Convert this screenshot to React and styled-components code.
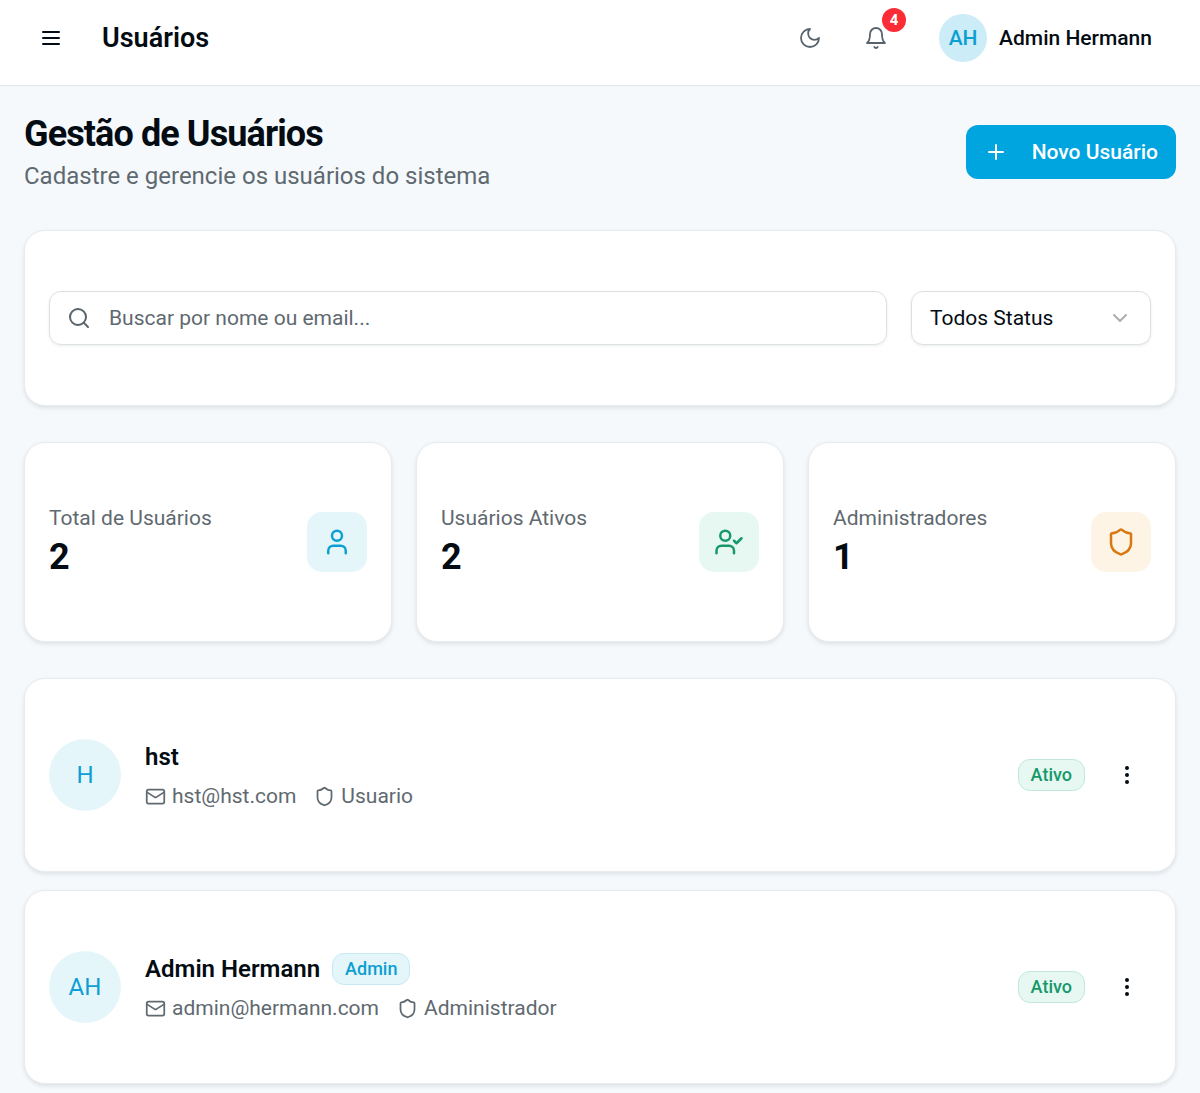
import { useState } from 'react';
import styled, { createGlobalStyle } from 'styled-components';
import {
  ChevronDown,
  EllipsisVertical,
  Mail,
  Plus,
  Search,
  Shield,
  User,
  UserCheck,
} from 'lucide-react';

const tones = {
  primary: { color: '#0d9fd3', background: '#e5f6fb', border: '#c5e9f4' },
  success: { color: '#16986b', background: '#e6f8f1', border: '#c0e9da' },
  warning: { color: '#d9780f', background: '#fef4e6', border: '#fbe0ba' },
};

const users = [
  { id: 1, name: 'hst', initials: 'H', email: 'hst@hst.com', role: 'Usuario', admin: false },
  {
    id: 2,
    name: 'Admin Hermann',
    initials: 'AH',
    email: 'admin@hermann.com',
    role: 'Administrador',
    admin: true,
  },
];

const stats = [
  { label: 'Total de Usuários', value: 2, icon: User, tone: 'primary' },
  { label: 'Usuários Ativos', value: 2, icon: UserCheck, tone: 'success' },
  { label: 'Administradores', value: 1, icon: Shield, tone: 'warning' },
];

function HeaderIcon({ paths, strokeWidth = 2 }) {
  return (
    <svg
      width="24"
      height="24"
      viewBox="0 0 24 24"
      fill="none"
      stroke="currentColor"
      strokeWidth={strokeWidth}
      strokeLinecap="round"
      strokeLinejoin="round"
    >
      {paths.map((d) => (
        <path key={d} d={d} />
      ))}
    </svg>
  );
}

const menuPaths = ['M4 6h16', 'M4 12h16', 'M4 18h16'];
const moonPaths = ['M12 3a6 6 0 0 0 9 9 9 9 0 1 1-9-9Z'];
const bellPaths = ['M6 8a6 6 0 0 1 12 0c0 7 3 9 3 9H3s3-2 3-9', 'M10.3 21a1.94 1.94 0 0 0 3.4 0'];

export default function App() {
  const [search, setSearch] = useState('');
  const [status, setStatus] = useState('todos');

  return (
    <>
      <GlobalStyle />
      <Header>
        <IconButton aria-label="Abrir menu">
          <HeaderIcon paths={menuPaths} />
        </IconButton>
        <HeaderTitle>Usuários</HeaderTitle>
        <HeaderActions>
          <IconButton $muted aria-label="Alternar tema">
            <HeaderIcon paths={moonPaths} strokeWidth={1.8} />
          </IconButton>
          <IconButton $muted aria-label="Notificações">
            <HeaderIcon paths={bellPaths} strokeWidth={1.8} />
            <Counter>4</Counter>
          </IconButton>
          <ProfileButton>
            <ProfileAvatar>AH</ProfileAvatar>
            Admin Hermann
          </ProfileButton>
        </HeaderActions>
      </Header>

      <Main>
        <PageHeading>
          <div>
            <Title>Gestão de Usuários</Title>
            <Subtitle>Cadastre e gerencie os usuários do sistema</Subtitle>
          </div>
          <NewButton>
            <Plus size={24} />
            Novo Usuário
          </NewButton>
        </PageHeading>

        <Filters>
          <SearchField>
            <Search size={24} />
            <SearchInput
              type="text"
              aria-label="Buscar usuários"
              placeholder="Buscar por nome ou email..."
              value={search}
              onChange={(e) => setSearch(e.target.value)}
            />
          </SearchField>
          <SelectField>
            <StatusSelect
              aria-label="Status"
              value={status}
              onChange={(e) => setStatus(e.target.value)}
            >
              <option value="todos">Todos Status</option>
              <option value="ativo">Ativo</option>
              <option value="inativo">Inativo</option>
            </StatusSelect>
            <ChevronDown size={24} />
          </SelectField>
        </Filters>

        <Stats>
          {stats.map(({ label, value, icon: Icon, tone }) => (
            <StatCard key={label}>
              <div>
                <StatLabel>{label}</StatLabel>
                <StatValue>{value}</StatValue>
              </div>
              <StatIcon $tone={tone}>
                <Icon size={30} />
              </StatIcon>
            </StatCard>
          ))}
        </Stats>

        <UserList>
          {users.map((user) => (
            <UserCard key={user.id}>
              <Avatar>{user.initials}</Avatar>
              <UserInfo>
                <NameRow>
                  <UserName>{user.name}</UserName>
                  {user.admin && <Badge $tone="primary">Admin</Badge>}
                </NameRow>
                <Details>
                  <Detail>
                    <Mail size={21} />
                    {user.email}
                  </Detail>
                  <Detail>
                    <Shield size={21} />
                    {user.role}
                  </Detail>
                </Details>
              </UserInfo>
              <Badge $tone="success">Ativo</Badge>
              <MoreButton aria-label={`Ações de ${user.name}`}>
                <EllipsisVertical size={24} />
              </MoreButton>
            </UserCard>
          ))}
        </UserList>
      </Main>
    </>
  );
}

const GlobalStyle = createGlobalStyle`
  * {
    box-sizing: border-box;
  }

  body {
    margin: 0;
    background: #f5f9fc;
    color: #040c13;
    font-family: Roboto, 'Liberation Sans', sans-serif;
    font-size: 21px;
    line-height: 30px;
  }

  h1, h2, h3, p, ul {
    margin: 0;
    padding: 0;
  }

  button, input, select {
    font: inherit;
    color: inherit;
  }

  button {
    border: none;
    background: none;
    padding: 0;
    cursor: pointer;
  }

  svg {
    flex-shrink: 0;
  }
`;

const Header = styled.header`
  display: flex;
  align-items: center;
  gap: 24px;
  padding: 11px 24px 20px;
  background: white;
  border-bottom: 1px solid #e0e5e9;
`;

const HeaderTitle = styled.h2`
  font-size: 27px;
  font-weight: 600;
  line-height: 42px;
`;

const HeaderActions = styled.div`
  display: flex;
  align-items: center;
  gap: 12px;
  margin-left: auto;
`;

const IconButton = styled.button`
  position: relative;
  display: flex;
  align-items: center;
  justify-content: center;
  width: 54px;
  height: 54px;
  color: ${({ $muted }) => ($muted ? '#59636b' : 'inherit')};
`;

const Counter = styled.span`
  position: absolute;
  top: -3px;
  right: -3px;
  width: 24px;
  height: 24px;
  border-radius: 50%;
  background: #fb2c36;
  color: white;
  font-size: 15px;
  font-weight: 700;
  line-height: 24px;
`;

const ProfileButton = styled.button`
  display: flex;
  align-items: center;
  gap: 12px;
  padding: 0 24px;
  font-weight: 500;
`;

const ProfileAvatar = styled.span`
  width: 48px;
  height: 48px;
  border-radius: 50%;
  background: #ccecf7;
  color: #0d9fd3;
  line-height: 48px;
`;

const Main = styled.main`
  display: flex;
  flex-direction: column;
  gap: 36px;
  padding: 24px 24px 8px;
`;

const PageHeading = styled.div`
  display: flex;
  align-items: center;
  justify-content: space-between;
`;

const Title = styled.h1`
  font-size: 36px;
  font-weight: 700;
  line-height: 48px;
  letter-spacing: -0.025em;
`;

const Subtitle = styled.p`
  color: #5f6970;
  font-size: 24px;
  line-height: 36px;
`;

const NewButton = styled.button`
  display: flex;
  align-items: center;
  gap: 24px;
  height: 54px;
  padding: 0 18px;
  border-radius: 12px;
  background: #00a5df;
  color: white;
  font-weight: 500;
`;

const Card = styled.section`
  padding: 60px 24px;
  background: white;
  border: 1px solid #e8ecef;
  border-radius: 21px;
  box-shadow: 0 2px 4px rgba(10, 20, 30, 0.1);
`;

const Filters = styled(Card)`
  display: flex;
  gap: 24px;
`;

const SearchField = styled.label`
  display: flex;
  flex: 1;
  align-items: center;
  gap: 18px;
  height: 54px;
  padding: 0 17px;
  border: 1px solid #dce1e4;
  border-radius: 12px;
  box-shadow: 0 1px 3px rgba(10, 20, 30, 0.08);
  color: #59636b;
`;

const SearchInput = styled.input`
  flex: 1;
  min-width: 0;
  padding: 0;
  border: none;
  outline: none;
  background: none;
  color: #040c13;

  &::placeholder {
    color: #5f6970;
    opacity: 1;
  }
`;

const SelectField = styled.div`
  position: relative;
  width: 240px;

  svg {
    position: absolute;
    top: 15px;
    right: 19px;
    color: #59636b;
    opacity: 0.5;
    pointer-events: none;
  }
`;

const StatusSelect = styled.select`
  width: 100%;
  height: 54px;
  padding: 0 18px;
  appearance: none;
  background: white;
  border: 1px solid #dce1e4;
  border-radius: 12px;
  box-shadow: 0 1px 3px rgba(10, 20, 30, 0.08);
`;

const Stats = styled.div`
  display: grid;
  grid-template-columns: repeat(3, 1fr);
  gap: 24px;
`;

const StatCard = styled(Card)`
  display: flex;
  align-items: center;
  justify-content: space-between;
`;

const StatLabel = styled.p`
  color: #5f6970;
`;

const StatValue = styled.p`
  font-size: 36px;
  font-weight: 700;
  line-height: 48px;
`;

const StatIcon = styled.div`
  display: flex;
  align-items: center;
  justify-content: center;
  width: 60px;
  height: 60px;
  border-radius: 15px;
  background: ${({ $tone }) => tones[$tone].background};
  color: ${({ $tone }) => tones[$tone].color};
`;

const UserList = styled.div`
  display: flex;
  flex-direction: column;
  gap: 18px;
`;

const UserCard = styled(Card)`
  display: flex;
  align-items: center;
  gap: 18px;
`;

const Avatar = styled.div`
  width: 72px;
  height: 72px;
  margin-right: 6px;
  border-radius: 50%;
  background: #e5f6fb;
  color: #0d9fd3;
  font-size: 24px;
  line-height: 72px;
  text-align: center;
`;

const UserInfo = styled.div`
  display: flex;
  flex: 1;
  flex-direction: column;
  gap: 6px;
`;

const NameRow = styled.div`
  display: flex;
  align-items: center;
  gap: 12px;
`;

const UserName = styled.h3`
  font-size: 24px;
  font-weight: 600;
  line-height: 36px;
`;

const Details = styled.div`
  display: flex;
  gap: 18px;
  color: #5f6970;
`;

const Detail = styled.span`
  display: flex;
  align-items: center;
  gap: 6px;
`;

const Badge = styled.span`
  padding: 0 12px;
  border: 1px solid ${({ $tone }) => tones[$tone].border};
  border-radius: 12px;
  background: ${({ $tone }) => tones[$tone].background};
  color: ${({ $tone }) => tones[$tone].color};
  font-size: 18px;
  font-weight: 500;
  line-height: 30px;
`;

const MoreButton = styled.button`
  display: flex;
  align-items: center;
  justify-content: center;
  width: 48px;
  height: 48px;
`;
